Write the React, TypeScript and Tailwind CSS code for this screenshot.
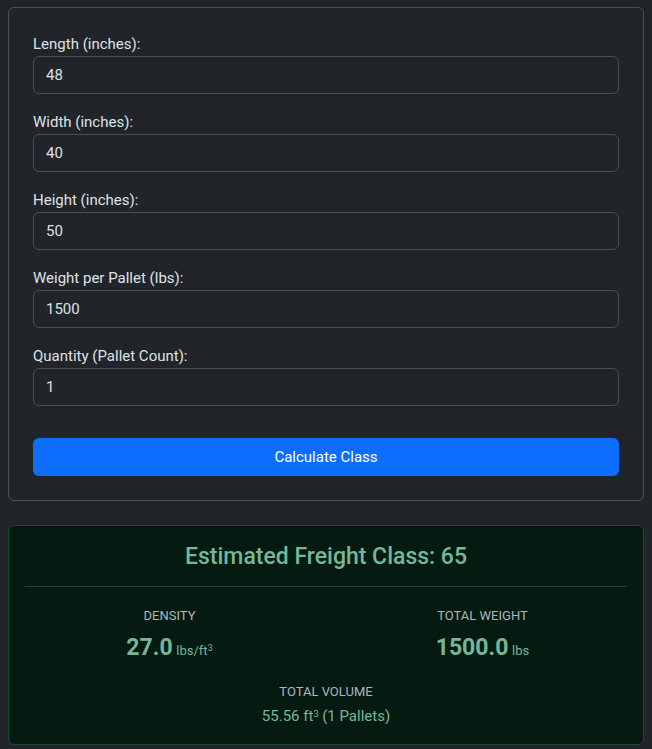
import { type FC, useState } from 'react';

type Field = { key: string; label: string; value: string };

const initialFields: Field[] = [
  { key: 'length', label: 'Length (inches):', value: '48' },
  { key: 'width', label: 'Width (inches):', value: '40' },
  { key: 'height', label: 'Height (inches):', value: '50' },
  { key: 'weight', label: 'Weight per Pallet (lbs):', value: '1500' },
  { key: 'qty', label: 'Quantity (Pallet Count):', value: '1' }
];

const App: FC = () => {
  const [fields, setFields] = useState<Field[]>(initialFields);

  const update = (key: string, value: string) => {
    setFields(fields.map((f) => (f.key === key ? { ...f, value } : f)));
  };

  return (
    <main
      className="min-h-screen w-full bg-[#212529] px-2 pt-[7px] text-[15px] text-[#dee2e6]"
      style={{ fontFamily: 'Roboto, "Noto Sans", sans-serif' }}
    >
      {/* input card */}
      <section className="rounded-md border border-[#495057] p-6">
        {fields.map((field) => (
          <div key={field.key} className="mb-4">
            <label className="block h-6 leading-6">{field.label}</label>
            <input
              value={field.value}
              onChange={(e) => update(field.key, e.target.value)}
              className="block h-[38px] w-full rounded-md border border-[#495057] bg-[#212529] px-3 text-[#dee2e6] outline-none"
            />
          </div>
        ))}
        <button className="mt-4 h-[38px] w-full rounded-md bg-[#0d6efd] text-white">
          Calculate Class
        </button>
      </section>

      {/* result panel */}
      <section className="mt-6 rounded-md border border-[#0f5132] bg-[#051b11] px-4 pt-4 pb-[14px] text-center text-[#75b798]">
        <h4 className="text-[23px] leading-[29px] font-medium">Estimated Freight Class: 65</h4>
        <hr className="mt-[15px] mb-[19px] border-t border-[#75b798]/25" />
        <div className="-mx-3 grid grid-cols-2">
          <div>
            <div className="text-[13px] leading-5 text-[#adb5bd]">DENSITY</div>
            <div className="mt-2">
              <span className="text-[23px] leading-7 font-bold">27.0</span>{' '}
              <span className="text-[13px]">
                lbs/ft<sup className="text-[9px]">3</sup>
              </span>
            </div>
          </div>
          <div>
            <div className="text-[13px] leading-5 text-[#adb5bd]">TOTAL WEIGHT</div>
            <div className="mt-2">
              <span className="text-[23px] leading-7 font-bold">1500.0</span>{' '}
              <span className="text-[13px]">lbs</span>
            </div>
          </div>
        </div>
        <div className="mt-5 text-[13px] leading-5 text-[#adb5bd]">TOTAL VOLUME</div>
        <div className="leading-7">
          55.56 ft<sup className="text-[9px]">3</sup> (1 Pallets)
        </div>
      </section>
    </main>
  );
};

export default App;
